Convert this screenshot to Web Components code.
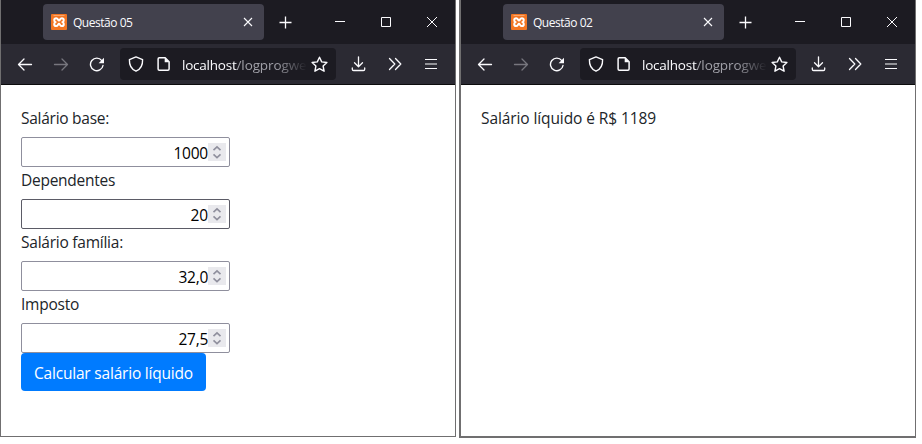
<!DOCTYPE html>
<html lang="pt-BR">
<head>
<meta charset="utf-8">
<title>Questão 05</title>
<style>
body{margin:0;background:#fff;height:444px;overflow:hidden;display:flex;align-items:flex-start;gap:3px;font-family:"Open Sans","Noto Sans",sans-serif;color:#212529}
</style>
</head>
<body>
<browser-window tab="Questão 05" style="--edge:1px">
  <salary-field label="Salário base:" lw="88" value="1000" vw="34.5"></salary-field>
  <salary-field label="Dependentes" lw="94" value="20" vw="17.5" style="--line:#5b5b66"></salary-field>
  <salary-field label="Salário família:" lw="102" value="32,0" vw="29.5"></salary-field>
  <salary-field label="Imposto" lw="58" value="27,5" vw="29.5"></salary-field>
  <submit-button><fit-text w="159">Calcular salário líquido</fit-text></submit-button>
</browser-window>
<browser-window tab="Questão 02" style="--edge:2px">
  <result-line><fit-text w="175">Salário líquido é R$ 1189</fit-text></result-line>
</browser-window>
<script>
// Inline text tracked so that it fills the width given in "w".
class FitText extends HTMLElement{
  constructor(){super();this.attachShadow({mode:'open'}).innerHTML='<style>:host{display:inline-block;white-space:nowrap}span{display:inline-block}</style><span><slot></slot></span>';}
  connectedCallback(){
    const s=this.shadowRoot.querySelector('span'),w=+this.getAttribute('w'),n=this.textContent.length;
    s.style.letterSpacing='0px';
    const d=(w-s.getBoundingClientRect().width)/n;
    s.style.letterSpacing=d.toFixed(3)+'px';
  }
}
class SalaryField extends HTMLElement{
  connectedCallback(){
    const a=k=>this.getAttribute(k);
    this.attachShadow({mode:'open'}).innerHTML=`<style>
    :host{display:block;width:209px;font-size:15.5px}
    label{display:block;height:24px;line-height:27px;margin-bottom:8px;padding-top:0}
    .box{box-sizing:border-box;height:30px;border:1px solid var(--line,#8f8f9d);border-radius:2px;display:flex;justify-content:flex-end;align-items:center;padding-right:3px;color:#000;background:#fff}
    .box fit-text{line-height:28px;padding-top:2px}
    svg{display:block;background:#e9e9ed;margin-bottom:0}
    </style><label><fit-text w="${a('lw')}">${a('label')}</fit-text></label>
    <div class="box"><fit-text w="${a('vw')}">${a('value')}</fit-text><svg width="18" height="18" fill="none" stroke="#8f8f9d" stroke-width="1.6"><path d="M5.5 7.2 9 3.9l3.5 3.3M5.5 11.3 9 14.6l3.5-3.3"/></svg></div>`;
  }
}
class SubmitButton extends HTMLElement{
  constructor(){super();this.attachShadow({mode:'open'}).innerHTML=`<style>:host{display:block}button{display:block;box-sizing:border-box;width:185px;height:38px;border:0;border-radius:4px;background:#007bff;color:#fff;font:15.5px/36px "Open Sans","Noto Sans",sans-serif;padding:2px 0 0 13px;text-align:left}</style><button><slot></slot></button>`;}
}
class ResultLine extends HTMLElement{
  constructor(){super();this.attachShadow({mode:'open'}).innerHTML='<style>:host{display:block;font-size:15.5px;line-height:27px}</style><slot></slot>';}
}
class BrowserWindow extends HTMLElement{
  connectedCallback(){
    this.attachShadow({mode:'open'}).innerHTML=`<style>
    :host{display:flex;flex-direction:column;flex:none;box-sizing:content-box;width:454px;height:436px;border:solid #706f70;border-width:0 1px var(--edge) var(--edge);background:#fff}
    .title{flex:none;height:44px;background:#1c1b22;display:flex;align-items:center;color:#fbfbfe}
    .tab{box-sizing:border-box;width:221px;height:36px;margin-left:42px;border-radius:4px;background:#42414d;display:flex;align-items:center;padding:0 11px 0 8px;font-size:12px}
    .tab fit-text{margin-left:6px;flex:1;line-height:36px;padding-top:1px}
    svg{display:block;flex:none;fill:none;stroke:#fbfbfe}
    .bar{flex:none;box-sizing:border-box;height:41px;background:#2b2a33;border-bottom:1px solid #0c0c0d;display:flex;align-items:center;padding-left:16px}
    .url{box-sizing:border-box;width:216px;height:32px;border-radius:4px;background:#1c1b22;display:flex;align-items:center;padding-left:8px;margin-left:15px;font-size:13.5px;color:#fbfbfe}
    .addr{display:flex;width:127px;margin-left:8px;line-height:32px;padding-top:2px;-webkit-mask-image:linear-gradient(90deg,#000 76%,transparent 100%);mask-image:linear-gradient(90deg,#000 76%,transparent 100%)}
    .path{color:#a0a0a8}
    .page{padding:20px}
    </style>
    <div class="title">
      <div class="tab">
        <svg width="16" height="16"><rect width="16" height="16" rx="1" fill="#f37623" stroke="none"/><path d="M2.500 1.500h11" stroke="#f9b27f" stroke-width=".8"/><path d="M5.200 4.300C7 4.300 7 6.500 8 6.500s1-2.200 2.800-2.200c2.700 0 2.200 3 1 3.800 1.200.8 1.700 4-.9 4C9 12.100 9 9.800 8 9.800s-1 2.300-2.900 2.300c-2.600 0-2.100-3.200-.9-4-1.200-.8-1.700-3.800 1-3.800Z" stroke="#fff" stroke-width="2"/></svg>
        <fit-text w="59.500">${this.getAttribute('tab')}</fit-text>
        <svg width="10" height="10" stroke-width="1.100"><path d="m1 1 8 8M9 1 1 9"/></svg>
      </div>
      <svg width="13" height="13" style="margin:1px 0 0 15px" stroke-width="1.300"><path d="M.5 6.500h12M6.500.5v12"/></svg>
      <svg width="10" height="10" style="margin-left:43px"><path d="M0 4.500h10"/></svg>
      <svg width="10" height="10" style="margin-left:36px"><path d="M.5.5h9v9h-9z"/></svg>
      <svg width="10" height="10" style="margin-left:36px"><path d="m0 0 10 10M10 0 0 10"/></svg>
    </div>
    <div class="bar">
      <svg width="16" height="16" stroke-width="1.300" stroke-linecap="round" stroke-linejoin="round"><path d="M14.500 8.500h-13M7 3 1.500 8.500 7 14"/></svg>
      <svg width="16" height="16" style="margin-left:20px;stroke:#77767e" stroke-width="1.300" stroke-linecap="round" stroke-linejoin="round"><path d="M1.500 8.500h13M9 3l5.500 5.500L9 14"/></svg>
      <svg width="16" height="16" style="margin-left:20px" stroke-width="1.400" stroke-linecap="round"><path d="M12.800 4.600A6.300 6.300 0 1 0 14 9.500"/><path d="M15 1.800v5.400H9.600z" fill="#fbfbfe" stroke="none"/></svg>
      <div class="url">
        <svg width="16" height="16" stroke-width="1.400" stroke-linejoin="round"><path d="M8 .9 1.400 3.600C1.200 9.200 3.500 13.500 8 15.200c4.500-1.700 6.800-6 6.600-11.600Z"/></svg>
        <svg width="16" height="16" style="margin-left:12px" stroke-width="1.500" stroke-linejoin="round"><path d="M3.300 1.800h5.900l3.900 3.900v7.400q0 1.200-1.200 1.200H3.300q-1.200 0-1.200-1.200V3q0-1.200 1.200-1.200Z"/><path d="M8.700 1.500v4.700h4.700z" fill="#fbfbfe" stroke="none"/></svg>
        <div class="addr"><fit-text w="54.500" style="margin-left:2px">localhost</fit-text><fit-text class="path" w="70">/logprogwe</fit-text></div>
        <svg width="17" height="17" style="margin-left:4px" stroke-width="1.400" stroke-linejoin="round"><path d="m8.500 1.200 2.200 4.700 5.200.6-3.800 3.500 1 5.200-4.600-2.600-4.600 2.600 1-5.200L1.100 6.500l5.200-.6Z"/></svg>
      </div>
      <svg width="15" height="16" style="margin-left:15px" stroke-width="1.300" stroke-linecap="round" stroke-linejoin="round"><path d="M7.500.8v9.700M3.500 6.700l4 4 4-4M1.300 12v1.200q0 1.300 1.300 1.300h9.800q1.300 0 1.300-1.300V12"/></svg>
      <svg width="14" height="14" style="margin-left:22px" stroke-width="1.300" stroke-linecap="round" stroke-linejoin="round"><path d="m1.500 1.500 5.300 5.500-5.300 5.500M7.500 1.500 12.800 7l-5.300 5.500"/></svg>
      <svg width="14" height="12" style="margin-left:22px" stroke-width="1.100"><path d="M1 1.500h12M1 6h12M1 10.500h12"/></svg>
    </div>
    <div class="page"><slot></slot></div>`;
  }
}
customElements.define('fit-text',FitText);
customElements.define('salary-field',SalaryField);
customElements.define('submit-button',SubmitButton);
customElements.define('result-line',ResultLine);
customElements.define('browser-window',BrowserWindow);
// Widths are measured once more after every host has its own type styles.
const refit=root=>root.querySelectorAll('*').forEach(e=>{if(e instanceof FitText)e.connectedCallback();if(e.shadowRoot)refit(e.shadowRoot);});
refit(document);
</script>
</body>
</html>
